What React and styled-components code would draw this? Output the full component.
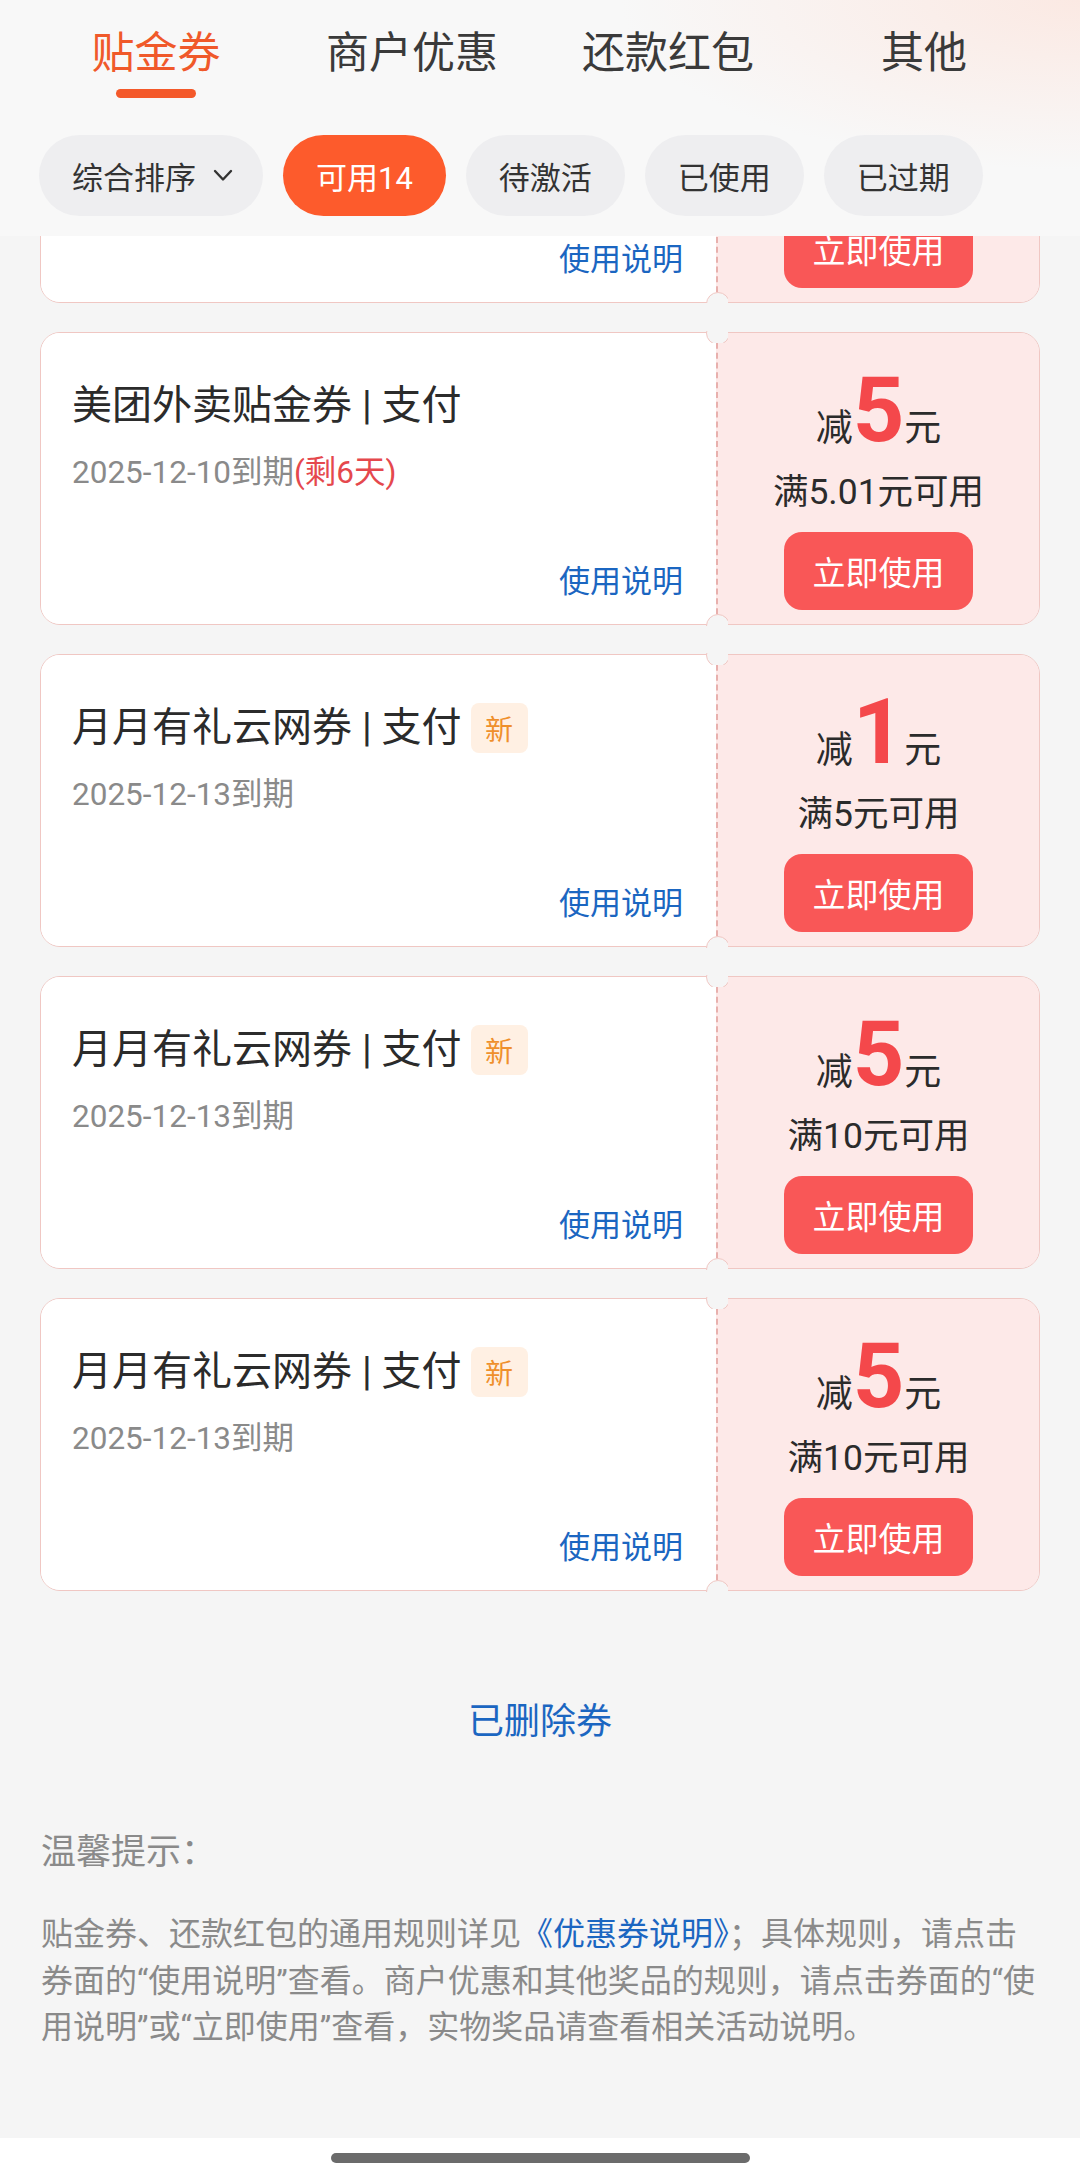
import React from "react";
import styled, { createGlobalStyle } from "styled-components";

const GlobalStyle = createGlobalStyle`
  html, body {
    margin: 0;
    padding: 0;
  }
  body {
    background: #f5f5f5;
    font-family: "Roboto", "Noto Sans CJK SC", sans-serif;
    color: #333;
  }
  * {
    box-sizing: border-box;
  }
`;

const Page = styled.div`
  width: 1080px;
  min-height: 2184px;
  display: flex;
  flex-direction: column;
  background: #f5f5f5;
`;

// 상단 탭 + 필터
const Header = styled.header`
  height: 236px;
  padding-top: 17px;
  background: radial-gradient(
      ellipse 460px 170px at 100% 0%,
      rgba(252, 228, 220, 0.75) 0%,
      rgba(252, 228, 220, 0) 100%
    ),
    #f8f8f8;
`;

const TabRow = styled.nav`
  display: grid;
  grid-template-columns: repeat(4, 1fr);
  padding: 0 28px;
`;

const Tab = styled.div`
  display: flex;
  flex-direction: column;
  align-items: center;
`;

const TabLabel = styled.span`
  font-family: "Noto Sans CJK SC", sans-serif;
  font-size: 43px;
  line-height: 64px;
  color: ${(p) => (p.$active ? "#f0592a" : "#3a3a3a")};
`;

const TabBar = styled.span`
  width: 80px;
  height: 9px;
  margin-top: 8px;
  border-radius: 5px;
  background: ${(p) => (p.$active ? "#f4592a" : "transparent")};
`;

const ChipRow = styled.div`
  display: flex;
  gap: 20px;
  margin-top: 37px;
  padding-left: 39px;
`;

const Chip = styled.div`
  height: 81px;
  padding: 0 ${(p) => (p.$sort ? "30px" : "33px")} 0 33px;
  display: flex;
  align-items: center;
  gap: 17px;
  border-radius: 41px;
  font-size: 31px;
  color: ${(p) => (p.$active ? "#fff" : "#333")};
  background: ${(p) => (p.$active ? "#fd5b2c" : "#eeeef0")};
`;

// 쿠폰 리스트
const List = styled.section`
  display: flex;
  flex-direction: column;
  gap: 29px;
  padding: 0 40px;
`;

const Peek = styled.div`
  height: 67px;
  overflow: hidden;
  display: flex;
  flex-direction: column;
  justify-content: flex-end;
`;

const Card = styled.div`
  position: relative;
  flex-shrink: 0;
  display: flex;
  height: 293px;
  border: 1.5px solid #f0c7c3;
  border-radius: 20px;
`;

const Notch = styled.span`
  position: absolute;
  left: 665px;
  ${(p) => (p.$bottom ? "bottom: -2px;" : "top: -2px;")}
  width: 22px;
  height: 12px;
  overflow: hidden;

  &::before {
    content: "";
    display: block;
    width: 22px;
    height: 22px;
    margin-top: ${(p) => (p.$bottom ? "0" : "-10px")};
    border-radius: 50%;
    border: 1.5px solid #f0c7c3;
    background: #f5f5f5;
  }
`;

const CardMain = styled.div`
  width: 675px;
  flex-shrink: 0;
  display: flex;
  flex-direction: column;
  padding: 45px 33px 20px 31px;
  background: #fff;
  border-radius: 18.5px 0 0 18.5px;
`;

const TitleRow = styled.div`
  display: flex;
  align-items: center;
  gap: 9px;
`;

const Title = styled.span`
  font-size: 40px;
  line-height: 56px;
  color: #2b2b2b;
`;

const NewBadge = styled.span`
  width: 57px;
  height: 50px;
  display: flex;
  align-items: center;
  justify-content: center;
  border-radius: 8px;
  font-size: 28px;
  color: #ef8f2b;
  background: #fff0e3;
`;

const Expire = styled.div`
  margin-top: 18px;
  font-size: 31.5px;
  line-height: 42px;
  color: #8a8a8a;
`;

const Remain = styled.span`
  color: #e5484d;
`;

const Guide = styled.span`
  margin-top: auto;
  align-self: flex-end;
  font-size: 31px;
  line-height: 44px;
  color: #1b66c1;
`;

const CardSide = styled.div`
  flex: 1;
  display: flex;
  flex-direction: column;
  align-items: center;
  padding-top: 33px;
  background: #fde9e8;
  border-left: 2px dashed #e8b0ad;
  border-radius: 0 18.5px 18.5px 0;
`;

const Amount = styled.div`
  display: flex;
  align-items: baseline;
  line-height: 1;
  color: #2b2b2b;
`;

const AmountUnit = styled.span`
  font-size: 37px;
`;

const AmountValue = styled.span`
  font-family: "Roboto", sans-serif;
  font-weight: 700;
  font-size: 90px;
  color: #f4484b;
`;

const Threshold = styled.div`
  margin-top: 16px;
  font-size: 35.5px;
  line-height: 40px;
  color: #2b2b2b;
`;

const UseButton = styled.button`
  width: 189px;
  height: 78px;
  margin-top: 20px;
  border: none;
  border-radius: 18px;
  font-family: inherit;
  font-size: 33px;
  color: #fff;
  background: #f95757;
`;

// 하단 안내
const Deleted = styled.div`
  padding-top: 106px;
  text-align: center;
  font-size: 36px;
  line-height: 50px;
  color: #1b66c1;
`;

const Tips = styled.section`
  margin-top: 81px;
  padding: 0 40px 0 41px;
  color: #8a8a8a;
`;

const TipsTitle = styled.div`
  font-size: 35px;
  line-height: 50px;
`;

const TipsText = styled.p`
  margin: 33px 0 0;
  font-size: 32px;
  line-height: 46.5px;
`;

const TipsLink = styled.span`
  color: #1b66c1;
`;

const BottomBar = styled.div`
  margin-top: auto;
  height: 46px;
  padding-top: 15px;
  display: flex;
  justify-content: center;
  background: #fff;
`;

const HomeIndicator = styled.span`
  width: 419px;
  height: 10px;
  border-radius: 5px;
  background: #6b6b6b;
`;

const tabs = ["贴金券", "商户优惠", "还款红包", "其他"];
const filters = ["可用14", "待激活", "已使用", "已过期"];

const coupons = [
  {
    title: "美团外卖贴金券 | 支付",
    date: "2025-12-10到期",
    remain: "(剩6天)",
    amount: 5,
    limit: "满5.01元可用",
  },
  {
    title: "美团外卖贴金券 | 支付",
    date: "2025-12-10到期",
    remain: "(剩6天)",
    amount: 5,
    limit: "满5.01元可用",
  },
  {
    title: "月月有礼云网券 | 支付",
    isNew: true,
    date: "2025-12-13到期",
    amount: 1,
    limit: "满5元可用",
  },
  {
    title: "月月有礼云网券 | 支付",
    isNew: true,
    date: "2025-12-13到期",
    amount: 5,
    limit: "满10元可用",
  },
  {
    title: "月月有礼云网券 | 支付",
    isNew: true,
    date: "2025-12-13到期",
    amount: 5,
    limit: "满10元可用",
  },
];

const Chevron = () => (
  <svg width="20" height="13" viewBox="0 0 20 13">
    <polyline
      points="2,2 10,10.5 18,2"
      fill="none"
      stroke="#333"
      strokeWidth="2.4"
      strokeLinecap="round"
      strokeLinejoin="round"
    />
  </svg>
);

const CouponCard = ({ coupon }) => (
  <Card>
    <CardMain>
      <TitleRow>
        <Title>{coupon.title}</Title>
        {coupon.isNew && <NewBadge>新</NewBadge>}
      </TitleRow>
      <Expire>
        {coupon.date}
        {coupon.remain && <Remain>{coupon.remain}</Remain>}
      </Expire>
      <Guide>使用说明</Guide>
    </CardMain>
    <CardSide>
      <Amount>
        <AmountUnit>减</AmountUnit>
        <AmountValue>{coupon.amount}</AmountValue>
        <AmountUnit>元</AmountUnit>
      </Amount>
      <Threshold>{coupon.limit}</Threshold>
      <UseButton>立即使用</UseButton>
    </CardSide>
    <Notch />
    <Notch $bottom />
  </Card>
);

const App = () => {
  const [first, ...rest] = coupons;

  return (
    <Page>
      <GlobalStyle />
      <Header>
        <TabRow>
          {tabs.map((tab, index) => (
            <Tab key={tab}>
              <TabLabel $active={index === 0}>{tab}</TabLabel>
              <TabBar $active={index === 0} />
            </Tab>
          ))}
        </TabRow>
        <ChipRow>
          <Chip $sort>
            综合排序
            <Chevron />
          </Chip>
          {filters.map((item, index) => (
            <Chip key={item} $active={index === 0}>
              {item}
            </Chip>
          ))}
        </ChipRow>
      </Header>

      <List>
        <Peek>
          <CouponCard coupon={first} />
        </Peek>
        {rest.map((coupon, index) => (
          <CouponCard key={index} coupon={coupon} />
        ))}
      </List>

      <Deleted>已删除券</Deleted>

      <Tips>
        <TipsTitle>温馨提示：</TipsTitle>
        <TipsText>
          贴金券、还款红包的通用规则详见<TipsLink>《优惠券说明》</TipsLink>；具体规则，请点击券面的“使用说明”查看。商户优惠和其他奖品的规则，请点击券面的“使用说明”或“立即使用”查看，实物奖品请查看相关活动说明。
        </TipsText>
      </Tips>

      <BottomBar>
        <HomeIndicator />
      </BottomBar>
    </Page>
  );
};

export default App;
